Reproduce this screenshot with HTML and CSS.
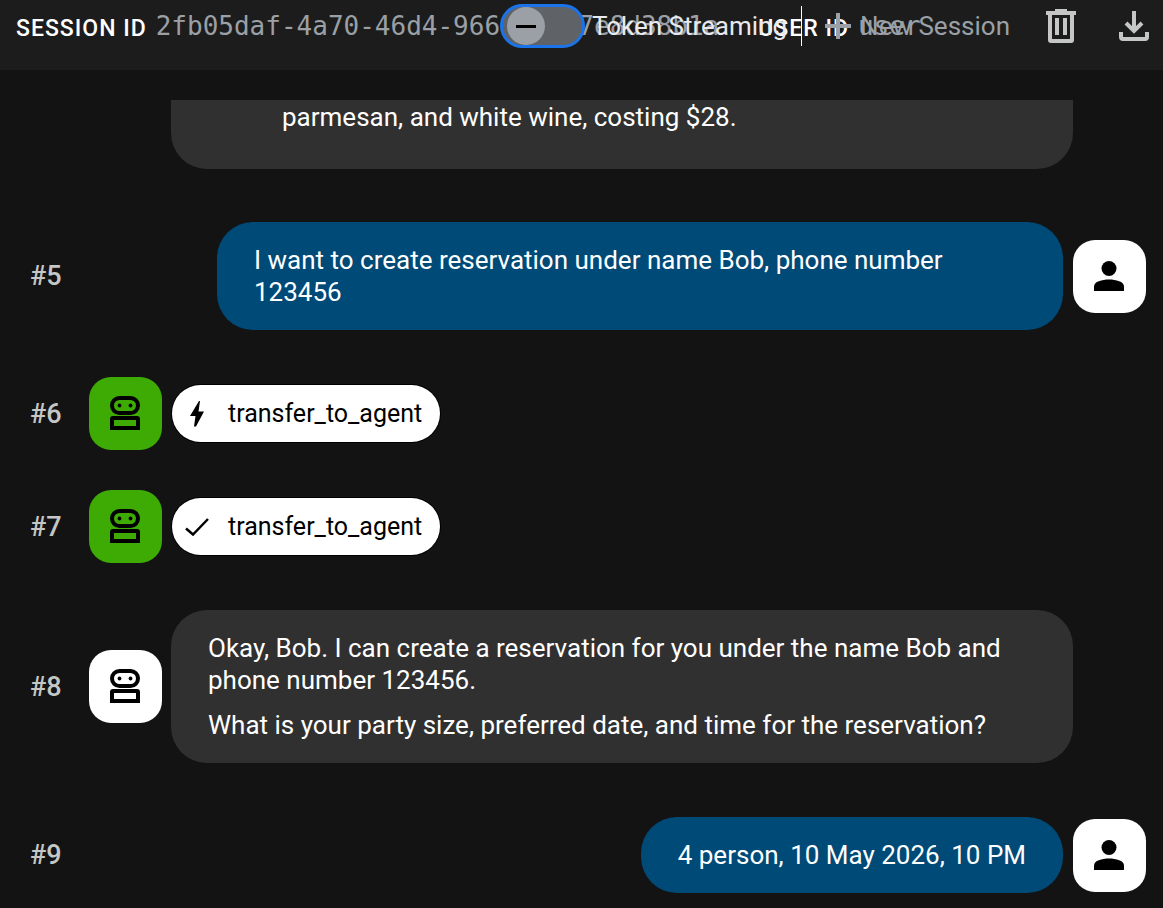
FILE: index.html
```
<!DOCTYPE html>
<html lang="en">
<head>
    <meta charset="UTF-8">
    <meta name="viewport" content="width=device-width, initial-scale=1.0">
    <title>Agent Chat</title>
    <link rel="stylesheet" href="styles.css">
</head>
<body>

<svg class="sprite" aria-hidden="true">
    <symbol id="icon-robot" viewBox="0 0 30 34">
        <rect x="2" y="2" width="26" height="15" rx="7.5" fill="none" stroke="currentColor" stroke-width="4"/>
        <circle cx="9.5" cy="9.5" r="1.9"/>
        <circle cx="20.5" cy="9.5" r="1.9"/>
        <path d="M3 20h24a3 3 0 0 1 3 3v11H0V23a3 3 0 0 1 3-3zm1 4v6h22v-6z" fill-rule="evenodd"/>
    </symbol>
    <symbol id="icon-person" viewBox="0 0 30 30">
        <circle cx="15" cy="7.5" r="7.5"/>
        <path d="M0 30v-4.500C0 20.500 8 18.500 15 18.500s15 2 15 7V30z"/>
    </symbol>
    <symbol id="icon-bolt" viewBox="0 0 14 26">
        <path d="M9 0 0 15h5.500L4 25.500h2L14 10.500H8.500L10 0z"/>
    </symbol>
    <symbol id="icon-check" viewBox="0 0 24 18">
        <path d="M1 10.500 8 16.500 23 1" fill="none" stroke="currentColor" stroke-width="2.500"/>
    </symbol>
</svg>

<header class="header">
    <div class="session">
        <span class="session-label">SESSION ID</span>
        <span class="session-value">2fb05daf-4a70-46d4-966e-1c07e8d38b1a</span>
        <span class="session-label user-label">USER ID</span>
        <span class="session-value">user</span>
    </div>
    <div class="toolbar">
        <input type="checkbox" role="switch" id="streaming" class="toggle">
        <label for="streaming" class="toggle-label">Token Streaming</label>
        <span class="divider"></span>
        <button class="new-session">
            <svg width="26" height="26" viewBox="0 0 26 26"><path d="M11 0h4v11h11v4H15v11h-4V15H0v-4h11z"/></svg>
            New Session
        </button>
        <button class="icon-button" aria-label="Delete session">
            <svg width="30" height="34" viewBox="0 0 30 34" fill="none" stroke="currentColor" stroke-width="4"><path d="M0 4h30" /><path d="M9 1.500h12" stroke-width="3"/><path d="M4 5v26a1 1 0 0 0 1 1h20a1 1 0 0 0 1-1V5"/><path d="M11 9v17M19 9v17"/></svg>
        </button>
        <button class="icon-button" aria-label="Export session">
            <svg width="30" height="30" viewBox="0 0 30 30" fill="none" stroke="currentColor" stroke-width="4"><path d="M15 0v20M7 12l8 8 8-8"/><path d="M2 21v5a2 2 0 0 0 2 2h22a2 2 0 0 0 2-2v-5"/></svg>
        </button>
    </div>
</header>

<main class="chat">
    <div class="row row-cut">
        <div class="bubble bubble-cut">
            <p>parmesan, and white wine, costing $28.</p>
        </div>
    </div>

    <div class="row row-user">
        <span class="number">#5</span>
        <div class="bubble bubble-user">
            <p>I want to create reservation under name Bob, phone number 123456</p>
        </div>
        <div class="avatar"><svg width="30" height="30"><use href="#icon-person"/></svg></div>
    </div>

    <div class="row">
        <span class="number">#6</span>
        <div class="avatar avatar-green"><svg width="30" height="34"><use href="#icon-robot"/></svg></div>
        <button class="event">
            <span class="event-icon"><svg width="14" height="26"><use href="#icon-bolt"/></svg></span>
            transfer_to_agent
        </button>
    </div>

    <div class="row">
        <span class="number">#7</span>
        <div class="avatar avatar-green"><svg width="30" height="34"><use href="#icon-robot"/></svg></div>
        <button class="event">
            <span class="event-icon"><svg width="24" height="18"><use href="#icon-check"/></svg></span>
            transfer_to_agent
        </button>
    </div>

    <div class="row">
        <span class="number">#8</span>
        <div class="avatar"><svg width="30" height="34"><use href="#icon-robot"/></svg></div>
        <div class="bubble bubble-bot">
            <p>Okay, Bob. I can create a reservation for you under the name Bob and phone number 123456.</p>
            <p>What is your party size, preferred date, and time for the reservation?</p>
        </div>
    </div>

    <div class="row row-user">
        <span class="number">#9</span>
        <div class="bubble bubble-user">
            <p>4 person, 10 May 2026, 10 PM</p>
        </div>
        <div class="avatar"><svg width="30" height="30"><use href="#icon-person"/></svg></div>
    </div>
</main>

</body>
</html>
```
FILE: styles.css
```
* {
    box-sizing: border-box;
}
body {
    margin: 0;
    height: 100vh;
    display: flex;
    flex-direction: column;
    overflow: hidden;
    background-color: #131313;
    color: #fff;
    font-family: Roboto, Arial, sans-serif;
    font-size: 26px;
    line-height: 32px;
}
button {
    border: none;
    padding: 0;
    background: none;
    font: inherit;
    cursor: pointer;
}
svg {
    display: block;
    fill: currentColor;
}
svg[fill="none"] {
    fill: none;
}
.sprite {
    position: absolute;
    width: 0;
    height: 0;
}

/* header */
.header {
    position: relative;
    flex: none;
    height: 70px;
    background-color: #1c1c1c;
}
.session {
    display: flex;
    align-items: flex-start;
    padding: 10px 16px 0;
    white-space: nowrap;
}
.session-label {
    margin-right: 9px;
    font-size: 23px;
    font-weight: 500;
    line-height: 38px;
    letter-spacing: 1px;
}
.user-label {
    margin-left: 39px;
}
.session-value {
    color: #9aa0a6;
    font-family: "DejaVu Sans Mono", monospace;
}
.toolbar {
    position: absolute;
    top: 4px;
    right: 14px;
    height: 44px;
    display: flex;
    align-items: center;
    white-space: nowrap;
}
.toggle {
    appearance: none;
    position: relative;
    margin: 0 7px 0 0;
    width: 85px;
    height: 44px;
    border: 3px solid #1a73e8;
    border-radius: 22px;
    background-color: #5f6368;
}
.toggle::before {
    content: "";
    position: absolute;
    top: 0;
    left: 4px;
    width: 38px;
    height: 38px;
    border-radius: 50%;
    background: linear-gradient(#000, #000) center / 20px 3px no-repeat #9aa0a6;
}
.toggle-label {
    color: #e8eaed;
}
.divider {
    width: 1px;
    height: 40px;
    margin: 0 23px 0 14px;
    background-color: #fff;
}
.new-session {
    display: flex;
    align-items: center;
    gap: 9px;
    margin-right: 36px;
    color: #9aa0a6;
}
.icon-button {
    color: #c4c7c5;
}
.icon-button + .icon-button {
    margin-left: 43px;
}

/* messages */
.chat {
    flex: 1;
    min-height: 0;
    margin-top: 30px;
    overflow: hidden;
}
.row {
    display: flex;
    align-items: center;
    padding: 20px 17px 20px 30px;
}
.row-cut {
    padding-top: 0;
    padding-bottom: 19px;
}
.row-user {
    justify-content: flex-end;
}
.number {
    flex: none;
    width: 59px;
    color: #c4c7c5;
    font-size: 27px;
    font-weight: 500;
}
.row-user .number {
    margin-right: auto;
}
.avatar {
    flex: none;
    display: flex;
    align-items: center;
    justify-content: center;
    width: 73px;
    height: 73px;
    padding: 0 1px 1px 0;
    border-radius: 22px;
    background-color: #fff;
    color: #000;
}
.avatar-green {
    background-color: #3eab04;
}
.bubble {
    margin: 7px 0;
    padding: 22px 37px;
    border-radius: 36px;
    background-color: #303030;
}
.bubble p {
    margin: 0;
}
.bubble p + p {
    margin-top: 13px;
}
.bubble-bot {
    flex: 1;
    margin-left: 9px;
    margin-right: 73px;
}
.bubble-cut {
    flex: 1;
    margin: 0 73px 7px 141px;
    padding: 1px 37px 36px 111px;
    border-radius: 0 0 36px 36px;
}
.bubble-user {
    margin-left: 128px;
    margin-right: 10px;
    background-color: #004a77;
}
.event {
    display: flex;
    align-items: center;
    height: 57px;
    margin-left: 10px;
    padding: 0 18px 0 12px;
    border-radius: 29px;
    background-color: #fff;
    box-shadow: 0 0 0 1px #000;
    color: #000;
    font-size: 25px;
}
.event-icon {
    display: flex;
    justify-content: center;
    width: 25px;
    margin-right: 19px;
}
```
